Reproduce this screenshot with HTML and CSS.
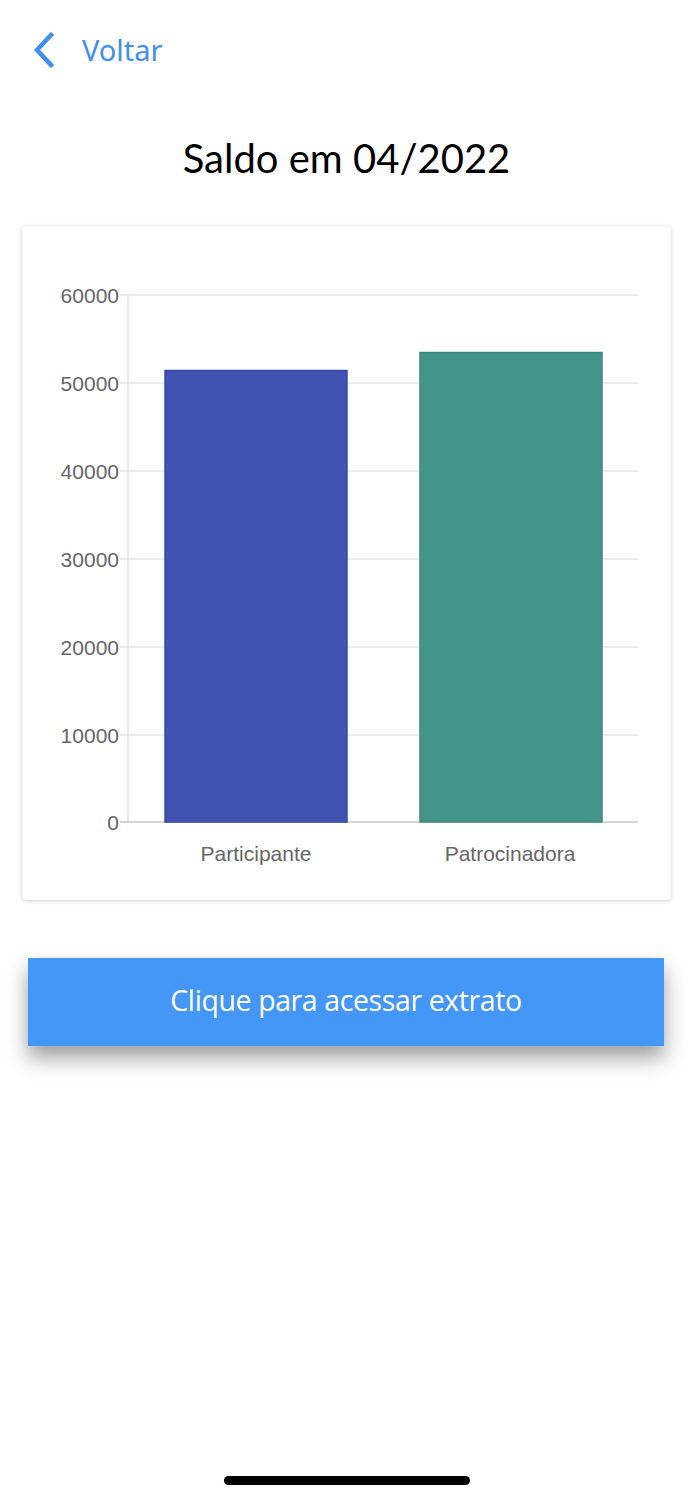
FILE: index.html
```html
<!DOCTYPE html>
<html lang="pt-BR">
<head>
<meta charset="utf-8">
<link rel="stylesheet" href="styles.css">
</head>
<body>
<div class="screen">
  <header class="topbar">
    <a class="back">
      <svg class="chev" width="24" height="36" viewBox="0 0 24 36"><path d="M19 3 L5 18 L19 33" fill="none" stroke="#3f8ef0" stroke-width="4.5" stroke-linecap="square"/></svg>
      <span class="back-text">Voltar</span>
    </a>
  </header>
  <h1 class="title">Saldo em 04/2022</h1>
  <section class="card">
    <svg class="chart" width="649" height="674" viewBox="0 0 649 674">
      <g stroke="#e3e3e3" stroke-width="1.5">
        <line x1="98" y1="69" x2="616" y2="69"/>
        <line x1="98" y1="157" x2="616" y2="157"/>
        <line x1="98" y1="245" x2="616" y2="245"/>
        <line x1="98" y1="333" x2="616" y2="333"/>
        <line x1="98" y1="421" x2="616" y2="421"/>
        <line x1="98" y1="509" x2="616" y2="509"/>
        <line x1="106" y1="69" x2="106" y2="596"/>
      </g>
      <line x1="98" y1="596" x2="616" y2="596" stroke="#c9c9c9" stroke-width="1.5"/>
      <rect x="143" y="144.5" width="182" height="451.5" fill="#4152b0" stroke="#3a4aa8" stroke-width="1.5"/>
      <rect x="398" y="126.5" width="182" height="469.5" fill="#43958a" stroke="#3b887d" stroke-width="1.5"/>
      <g class="ylab" text-anchor="end">
        <text x="97" y="77">60000</text>
        <text x="97" y="165">50000</text>
        <text x="97" y="253">40000</text>
        <text x="97" y="341">30000</text>
        <text x="97" y="429">20000</text>
        <text x="97" y="517">10000</text>
        <text x="97" y="604">0</text>
      </g>
      <g class="xlab" text-anchor="middle">
        <text x="234" y="635">Participante</text>
        <text x="488" y="635">Patrocinadora</text>
      </g>
    </svg>
  </section>
  <button class="cta">Clique para acessar extrato</button>
  <div class="spacer"></div>
  <div class="home-indicator"></div>
</div>
</body>
</html>
```
FILE: styles.css
```css
html, body {
  margin: 0;
  padding: 0;
  background: #ffffff;
}
.screen {
  width: 693px;
  height: 1500px;
  display: flex;
  flex-direction: column;
  align-items: stretch;
  font-family: "Open Sans", "Noto Sans", sans-serif;
}
.topbar {
  height: 100px;
  padding: 32px 0 0 32px;
  box-sizing: border-box;
}
.back {
  display: flex;
  align-items: center;
  gap: 26px;
  color: #3f8ef0;
}
.chev {
  display: block;
}
.back-text {
  font-family: "Noto Sans", sans-serif;
  font-size: 29px;
  line-height: 36px;
  color: #3f8ef0;
}
.title {
  margin: 28px 0 0 0;
  height: 98px;
  text-align: center;
  font-family: "Lato", sans-serif;
  font-weight: 400;
  font-size: 40px;
  line-height: 60px;
  color: #000;
}
.card {
  margin: 0 22px 0 22px;
  height: 674px;
  background: #fff;
  border-radius: 4px;
  box-shadow: 0 1px 4px rgba(0,0,0,0.18), 0 0 1px rgba(0,0,0,0.08);
}
.chart {
  display: block;
}
.ylab text {
  font-family: "Liberation Sans", Arial, sans-serif;
  font-size: 21px;
  fill: #666;
}
.xlab text {
  font-family: "Liberation Sans", Arial, sans-serif;
  font-size: 21px;
  fill: #666;
}
.cta {
  margin: 58px 29px 0 28px;
  height: 88px;
  border: 0;
  background: #4496f7;
  color: #fff;
  font-family: "Open Sans", sans-serif;
  font-size: 28.5px;
  letter-spacing: -0.4px;
  line-height: 84px;
  box-shadow: 0 12px 20px rgba(0,0,0,0.38);
  padding: 0 0 4px 0;
}
.spacer {
  flex: 1;
}
.home-indicator {
  align-self: center;
  width: 246px;
  height: 9px;
  border-radius: 5px;
  background: #000;
  margin-bottom: 15px;
}
```
